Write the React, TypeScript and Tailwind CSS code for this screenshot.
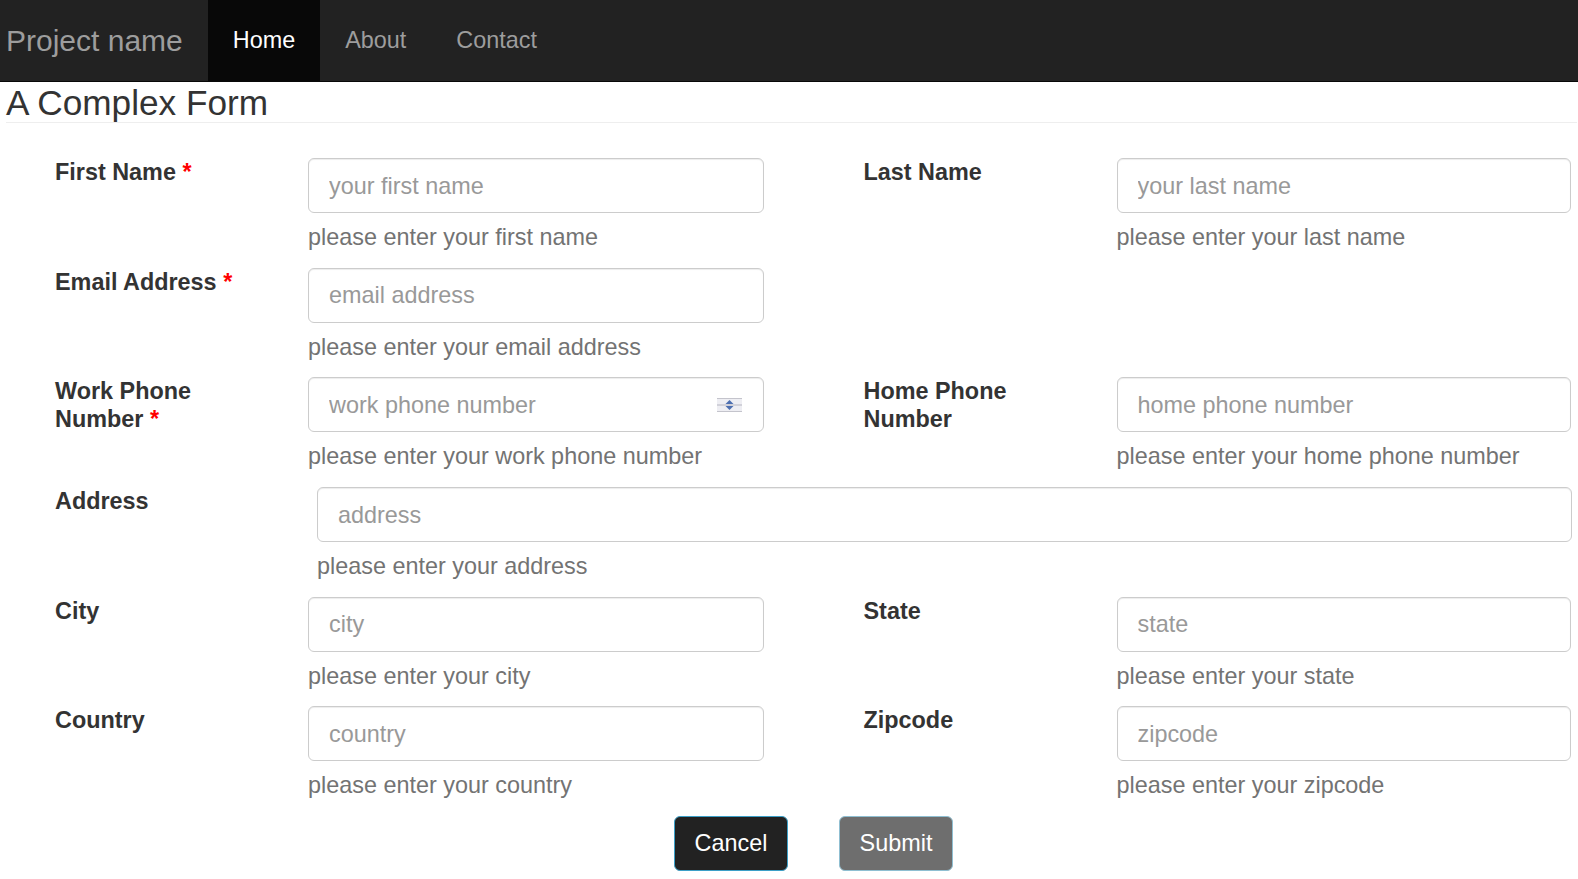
import React from "react";

interface FieldProps {
  label: string;
  required?: boolean;
  placeholder: string;
  help: string;
  spinner?: boolean;
  right?: boolean;
}

function Spinner() {
  return (
    <svg width="25" height="14" viewBox="0 0 25 14" className="absolute right-[22px] top-1/2 -translate-y-1/2">
      <rect x="0" y="0" width="25" height="14" fill="#eeeef3" />
      <line x1="0" y1="0.5" x2="25" y2="0.5" stroke="#c4c4cc" />
      <line x1="0" y1="7" x2="25" y2="7" stroke="#b4b4c0" />
      <line x1="0" y1="13.5" x2="25" y2="13.5" stroke="#c4c4cc" />
      <path d="M8.5 6 L12.5 2 L16.5 6Z" fill="#4d6fb0" />
      <path d="M8.5 8 L12.5 12 L16.5 8Z" fill="#4d6fb0" />
    </svg>
  );
}

function Field({ label, required, placeholder, help, spinner, right }: FieldProps) {
  return (
    <div className="flex">
      <label className="w-[253px] pr-[50px] text-[23.4px] leading-[28px] font-bold text-[#333]">
        {label}
        {required && <span className="text-[#f00]">&nbsp;*</span>}
      </label>
      <div className={right ? "w-[454px]" : "w-[456px]"}>
        <div className="relative">
          <input
            type="text"
            placeholder={placeholder}
            className="w-full h-[55px] px-[20px] pt-px border border-[#ccc] rounded-[6px] text-[23.4px] text-[#555] placeholder:text-[#999] shadow-[inset_0_1px_1px_rgba(0,0,0,0.075)] outline-none"
          />
          {spinner && <Spinner />}
        </div>
        <p className="mt-[8px] text-[23.4px] leading-[32px] text-[#737373]">{help}</p>
      </div>
    </div>
  );
}

export default function App() {
  return (
    <div className="w-[1578px] min-h-[879px] bg-white font-['Liberation_Sans',Arial,sans-serif]">
      {/* Navbar */}
      <nav className="h-[82px] bg-[#222] border-b border-[#080808] flex">
        <a className="pl-[6px] pr-[25px] flex items-center text-[30px] text-[#9d9d9d]">Project name</a>
        <a className="px-[25px] flex items-center bg-[#080808] text-[23.4px] text-white">Home</a>
        <a className="px-[25px] flex items-center text-[23.4px] text-[#9d9d9d]">About</a>
        <a className="px-[25px] flex items-center text-[23.4px] text-[#9d9d9d]">Contact</a>
      </nav>

      {/* Title */}
      <div className="h-[41px] ml-[6px] mr-px border-b border-[#eee]">
        <h1 className="pt-[2px] text-[35.2px] leading-[37px] text-[#333]">A Complex Form</h1>
      </div>

      {/* Form */}
      <form className="pt-[35px]">
        <div className="flex pl-[55px] mb-[14.7px]">
          <Field label="First Name" required placeholder="your first name" help="please enter your first name" />
          <div className="w-[99.5px]" />
          <Field right label="Last Name" placeholder="your last name" help="please enter your last name" />
        </div>

        <div className="flex pl-[55px] mb-[14.7px]">
          <Field label="Email Address" required placeholder="email address" help="please enter your email address" />
        </div>

        <div className="flex pl-[55px] mb-[14.7px]">
          <Field
            label="Work Phone Number"
            required
            placeholder="work phone number"
            help="please enter your work phone number"
            spinner
          />
          <div className="w-[99.5px]" />
          <Field right label="Home Phone Number" placeholder="home phone number" help="please enter your home phone number" />
        </div>

        <div className="flex pl-[55px] pr-[6.5px] mb-[14.7px]">
          <label className="w-[262px] text-[23.4px] leading-[28px] font-bold text-[#333]">Address</label>
          <div className="flex-1">
            <input
              type="text"
              placeholder="address"
              className="w-full h-[55px] px-[20px] pt-px border border-[#ccc] rounded-[6px] text-[23.4px] text-[#555] placeholder:text-[#999] shadow-[inset_0_1px_1px_rgba(0,0,0,0.075)] outline-none"
            />
            <p className="mt-[8px] text-[23.4px] leading-[32px] text-[#737373]">please enter your address</p>
          </div>
        </div>

        <div className="flex pl-[55px] mb-[14.7px]">
          <Field label="City" placeholder="city" help="please enter your city" />
          <div className="w-[99.5px]" />
          <Field right label="State" placeholder="state" help="please enter your state" />
        </div>

        <div className="flex pl-[55px] mb-[14.7px]">
          <Field label="Country" placeholder="country" help="please enter your country" />
          <div className="w-[99.5px]" />
          <Field right label="Zipcode" placeholder="zipcode" help="please enter your zipcode" />
        </div>

        {/* Buttons */}
        <div className="flex pl-[674px] gap-[51px]">
          <button type="button" className="w-[114px] h-[55px] rounded-[6px] bg-[#222] border border-[#3b9fc7] text-[23.4px] text-white">
            Cancel
          </button>
          <button type="button" className="w-[114px] h-[55px] rounded-[6px] bg-[#6e6e6e] border border-[#8fbfd2] text-[23.4px] text-white">
            Submit
          </button>
        </div>
      </form>
    </div>
  );
}
